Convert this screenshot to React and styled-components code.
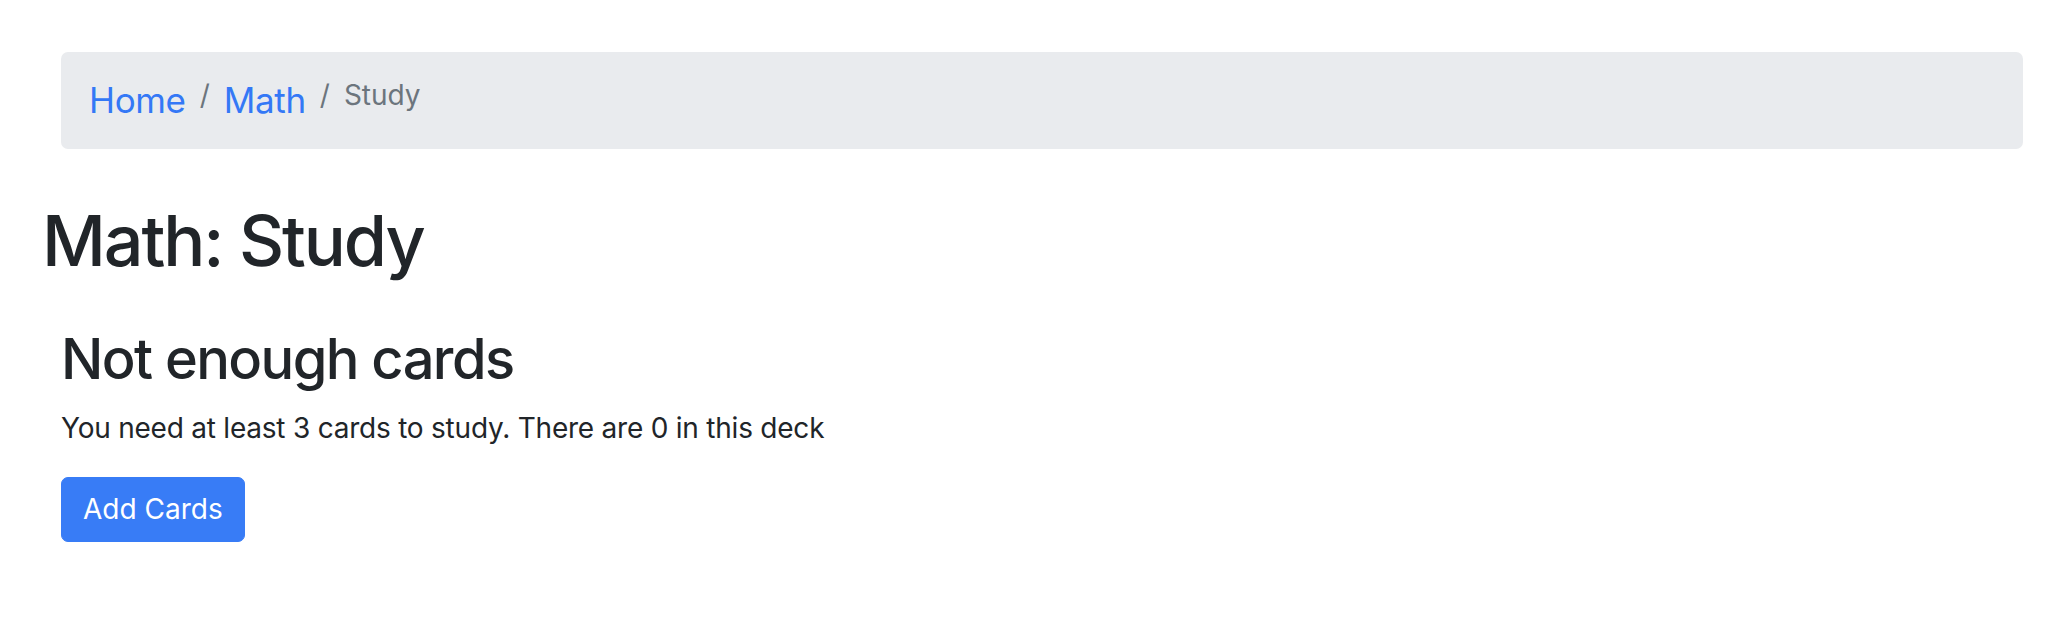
import React from "react";
import styled, {createGlobalStyle} from "styled-components";

const GlobalStyle = createGlobalStyle`
    html, body {
        margin: 0;
        padding: 0;
        background: #fff;
    }

    body {
        font-family: Inter, "Liberation Sans", Arial, sans-serif;
        font-size: 28px;
        line-height: 1.5;
        color: #212529;
    }
`;

const Page = styled.div`
    padding: 52px 37px 40px 42px;
`;

const Crumbs = styled.ol`
    display: flex;
    align-items: flex-start;
    list-style: none;
    margin: 0 0 50px 19px;
    padding: 22px 28px;
    background: #e9ebee;
    border-radius: 7px;
`;

const Crumb = styled.li`
    font-size: 28px;
    line-height: 1.5;
    color: ${(props) => (props.active ? "#6c757d" : "inherit")};

    &:not(:first-child) {
        padding-left: 14px;
    }

    &:not(:first-child)::before {
        content: "/";
        float: left;
        padding-right: 14px;
        color: #6c757d;
    }
`;

const CrumbLink = styled.a`
    font-size: 35px;
    line-height: 1.5;
    letter-spacing: -0.01em;
    color: #3478f6;
    text-decoration: none;
`;

const Title = styled.h1`
    margin: 0 0 14px;
    font-size: 70px;
    font-weight: 500;
    line-height: 1.2;
    letter-spacing: -0.03em;
`;

const Section = styled.section`
    padding: 29px 0 0 19px;
`;

const Subtitle = styled.h2`
    margin: 0 0 14px;
    font-size: 56px;
    font-weight: 500;
    line-height: 1.2;
    letter-spacing: -0.028em;
`;

const Message = styled.p`
    margin: 0 0 28px;
    letter-spacing: -0.008em;
`;

const Button = styled.button`
    font-family: inherit;
    font-size: 28px;
    line-height: 1.5;
    color: #fff;
    background: #387cf6;
    border: 1px solid #387cf6;
    border-radius: 7px;
    padding: 10.5px 21px;
    cursor: pointer;
`;

export default function App() {
    return (
        <>
            <GlobalStyle/>
            <Page>
                <nav>
                    <Crumbs>
                        <Crumb><CrumbLink href="#">Home</CrumbLink></Crumb>
                        <Crumb><CrumbLink href="#">Math</CrumbLink></Crumb>
                        <Crumb active>Study</Crumb>
                    </Crumbs>
                </nav>
                <Title>Math: Study</Title>
                <Section>
                    <Subtitle>Not enough cards</Subtitle>
                    <Message>You need at least 3 cards to study. There are 0 in this deck</Message>
                    <Button>Add Cards</Button>
                </Section>
            </Page>
        </>
    )
}
